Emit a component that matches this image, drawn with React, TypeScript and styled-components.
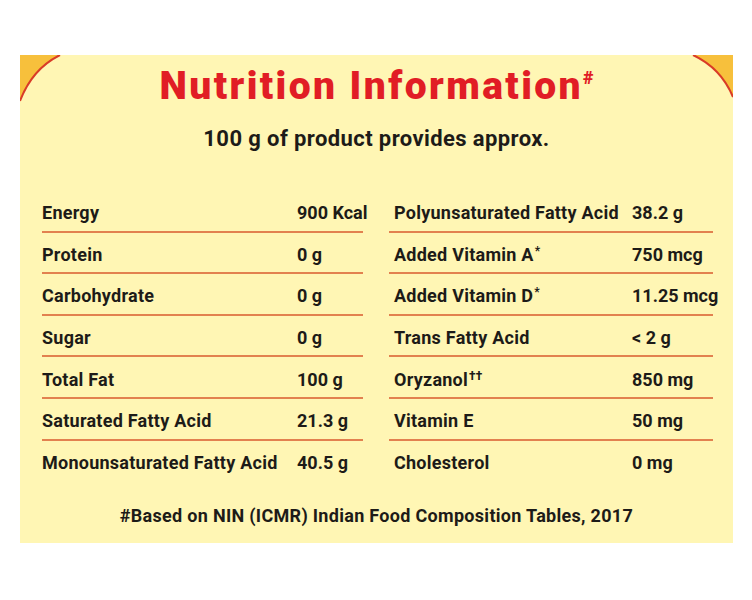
import React from 'react';
import styled, { createGlobalStyle } from 'styled-components';

const GlobalStyle = createGlobalStyle`
  html, body {
    margin: 0;
    padding: 0;
    background: #ffffff;
  }
  body {
    font-family: Roboto, "Liberation Sans", Arial, sans-serif;
    color: #1d1b18;
  }
`;

const Page = styled.div`
  padding: 55px 19px 57px 20px;
`;

const Panel = styled.section`
  position: relative;
  box-sizing: border-box;
  width: 713px;
  height: 488px;
  padding-top: 11px;
  background: #fff6b4;
  overflow: hidden;
`;

const Corner: any = styled.svg`
  position: absolute;
  top: 0;
  ${({ side }: any) => (side === 'left' ? 'left: 0;' : 'right: 0;')}
  width: 44px;
  height: 48px;
`;

const Title = styled.h1`
  margin: 0;
  text-align: center;
  font-size: 39px;
  line-height: 40px;
  font-weight: 900;
  color: #e11d25;
  letter-spacing: 2.4px;

  sup {
    font-size: 18px;
    vertical-align: 15px;
    line-height: 0;
    letter-spacing: 0;
  }
`;

const Subtitle = styled.p`
  margin: 21px 0 0;
  text-align: center;
  font-size: 22px;
  line-height: 24px;
  font-weight: 700;
  letter-spacing: 0.4px;
`;

const Table = styled.div`
  display: grid;
  grid-template-columns: 321px 324px;
  column-gap: 26px;
  margin: 40px 0 0 22px;
`;

const Column = styled.div`
  display: flex;
  flex-direction: column;
`;

const Row: any = styled.div`
  box-sizing: border-box;
  display: grid;
  grid-template-columns: ${({ valueAt }: any) => valueAt}px 1fr;
  align-items: center;
  height: 41.6px;
  padding: 4px 0 0 ${({ indent }: any) => indent}px;
  border-bottom: 2px solid ${({ last }: any) => (last ? 'transparent' : '#e2814f')};
  font-size: 18px;
  font-weight: 700;
  white-space: nowrap;

  sup {
    font-size: 12px;
    vertical-align: 6px;
    line-height: 0;
    margin-left: 1px;
  }
`;

const Label = styled.span`
  letter-spacing: 0.25px;
`;

const Value = styled.span`
  letter-spacing: 0;
`;

const Footer = styled.p`
  margin: 24px 0 0;
  text-align: center;
  font-size: 18px;
  line-height: 20px;
  font-weight: 700;
  letter-spacing: 0.3px;
`;

type Item = { label: React.ReactNode; value: string };

const leftItems: Item[] = [
  { label: 'Energy', value: '900 Kcal' },
  { label: 'Protein', value: '0 g' },
  { label: 'Carbohydrate', value: '0 g' },
  { label: 'Sugar', value: '0 g' },
  { label: 'Total Fat', value: '100 g' },
  { label: 'Saturated Fatty Acid', value: '21.3 g' },
  { label: 'Monounsaturated Fatty Acid', value: '40.5 g' },
];

const rightItems: Item[] = [
  { label: 'Polyunsaturated Fatty Acid', value: '38.2 g' },
  { label: <>Added Vitamin A<sup>*</sup></>, value: '750 mcg' },
  { label: <>Added Vitamin D<sup>*</sup></>, value: '11.25 mcg' },
  { label: 'Trans Fatty Acid', value: '< 2 g' },
  { label: <>Oryzanol<sup>††</sup></>, value: '850 mg' },
  { label: 'Vitamin E', value: '50 mg' },
  { label: 'Cholesterol', value: '0 mg' },
];

function NutrientColumn({ items, valueAt, indent }: { items: Item[]; valueAt: number; indent: number }) {
  return (
    <Column>
      {items.map((item, i) => (
        <Row key={i} valueAt={valueAt} indent={indent} last={i === items.length - 1}>
          <Label>{item.label}</Label>
          <Value>{item.value}</Value>
        </Row>
      ))}
    </Column>
  );
}

export default function App() {
  return (
    <>
      <GlobalStyle />
      <Page>
        <Panel>
          <Corner side="left" viewBox="0 0 44 48">
            <path d="M0 0 H40 Q12 14 0 46 Z" fill="#f7c03c" />
            <path d="M40 0 Q12 14 0 46" fill="none" stroke="#d93b27" strokeWidth="2" />
          </Corner>
          <Corner side="right" viewBox="0 0 44 48">
            <path d="M44 0 H4 Q32 13 44 42 Z" fill="#f7c03c" />
            <path d="M4 0 Q32 13 44 42" fill="none" stroke="#d93b27" strokeWidth="2" />
          </Corner>

          <Title>
            Nutrition Information<sup>#</sup>
          </Title>
          <Subtitle>100 g of product provides approx.</Subtitle>

          <Table>
            <NutrientColumn items={leftItems} valueAt={255} indent={0} />
            <NutrientColumn items={rightItems} valueAt={238} indent={5} />
          </Table>

          <Footer>#Based on NIN (ICMR) Indian Food Composition Tables, 2017</Footer>
        </Panel>
      </Page>
    </>
  );
}
